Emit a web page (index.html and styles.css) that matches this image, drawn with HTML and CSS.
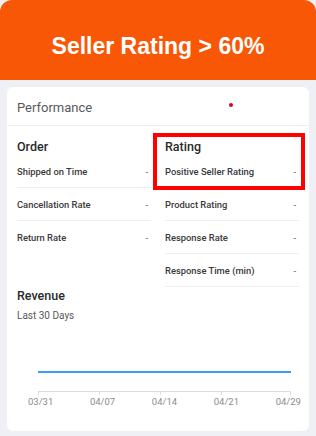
FILE: index.html
```html
<!DOCTYPE html>
<html lang="en">
<head>
    <meta charset="UTF-8">
    <meta name="viewport" content="width=device-width, initial-scale=1.0">
    <title>Seller Rating</title>
    <link rel="stylesheet" href="styles.css">
</head>
<body>
    <div class="banner">
        <h1>Seller Rating &gt; 60%</h1>
    </div>

    <div class="page">
        <div class="card">
            <div class="card-header">
                <span>Performance</span>
                <span class="dot"></span>
            </div>

            <div class="metrics">
                <div class="metric-col">
                    <h3>Order</h3>
                    <div class="metric-row"><span>Shipped on Time</span><span class="val">-</span></div>
                    <div class="metric-row"><span>Cancellation Rate</span><span class="val">-</span></div>
                    <div class="metric-row"><span>Return Rate</span><span class="val">-</span></div>
                </div>
                <div class="metric-col rating">
                    <h3>Rating</h3>
                    <div class="metric-row"><span>Positive Seller Rating</span><span class="val">-</span></div>
                    <div class="metric-row"><span>Product Rating</span><span class="val">-</span></div>
                    <div class="metric-row"><span>Response Rate</span><span class="val">-</span></div>
                    <div class="metric-row"><span>Response Time (min)</span><span class="val">-</span></div>
                    <div class="highlight"></div>
                </div>
            </div>

            <div class="revenue">
                <h3>Revenue</h3>
                <p class="sub">Last 30 Days</p>
                <div class="chart">
                    <div class="line"></div>
                    <div class="axis">
                        <span class="tick" style="left: 0%"></span>
                        <span class="tick" style="left: 24.1%"></span>
                        <span class="tick" style="left: 48.2%"></span>
                        <span class="tick" style="left: 72.3%"></span>
                        <span class="tick" style="left: 100%"></span>
                    </div>
                    <div class="labels">
                        <span>03/31</span>
                        <span>04/07</span>
                        <span>04/14</span>
                        <span>04/21</span>
                        <span>04/29</span>
                    </div>
                </div>
            </div>
        </div>
    </div>
</body>
</html>
```

FILE: styles.css
```css
:root {
    --orange: #f85706;
    --bg-page: #eff0f5;
    --text-primary: #2b2b2b;
    --text-secondary: #595959;
    --text-muted: #8c8c8c;
    --line: #efefef;
    --blue: #3b9bf5;
}

body {
    font-family: Roboto, "Liberation Sans", sans-serif;
    margin: 0;
    background: var(--bg-page);
    color: var(--text-primary);
    width: 316px;
    height: 436px;
    overflow: hidden;
}

.banner {
    background: var(--orange);
    height: 80px;
    border-radius: 12px 12px 0 0;
    display: flex;
    align-items: center;
    justify-content: center;
}

.banner h1 {
    margin: 13px 0 0;
    color: #fff;
    font-family: "Liberation Sans", Arial, sans-serif;
    font-size: 23px;
    font-weight: 700;
}

.page {
    padding: 7px 7px 0 7px;
}

.card {
    background: #fff;
    border-radius: 6px;
    height: 344px;
    padding: 0 10px;
    box-sizing: border-box;
}

.card-header {
    height: 39px;
    border-bottom: 1px solid var(--line);
    margin: 0 -10px;
    padding: 3px 10px 0;
    box-sizing: border-box;
    display: flex;
    align-items: center;
    font-size: 13px;
    color: var(--text-secondary);
    position: relative;
}

.dot {
    position: absolute;
    left: 222px;
    top: 16px;
    width: 4px;
    height: 4px;
    border-radius: 50%;
    background: #e8001c;
}

.metrics {
    display: grid;
    grid-template-columns: 1fr 1fr;
    column-gap: 14px;
    padding-top: 13px;
}

.metric-col {
    position: relative;
}

h3 {
    margin: 0;
    font-size: 12.5px;
    font-weight: 500;
    color: var(--text-primary);
    height: 16px;
    line-height: 16px;
}

.metric-row {
    height: 33px;
    display: flex;
    align-items: center;
    justify-content: space-between;
    padding-right: 3px;
    border-bottom: 1px solid var(--line);
    font-size: 9.4px;
    font-weight: 500;
    color: #3a3a3a;
    box-sizing: border-box;
}

.metric-row:last-of-type {
    border-bottom: none;
}

.metric-row .val {
    font-weight: 400;
    color: var(--text-secondary);
}

.highlight {
    position: absolute;
    left: -12px;
    right: -6px;
    top: -6px;
    height: 57px;
    border: 4px solid #ff0000;
    box-sizing: border-box;
}

.revenue {
    padding-top: 1px;
}

.sub {
    margin: 6px 0 0;
    font-size: 10px;
    color: var(--text-secondary);
}

.chart {
    position: relative;
    margin: 50px 8px 0 21px;
}

.line {
    height: 2px;
    background: var(--blue);
}

.axis {
    position: relative;
    margin-top: 18px;
    height: 1px;
    background: #dcdcdc;
}

.tick {
    position: absolute;
    top: 0;
    width: 1px;
    height: 4px;
    background: #dcdcdc;
}

.tick:last-child {
    margin-left: -1px;
}

.labels {
    display: flex;
    justify-content: space-between;
    margin: 4px -10px 0;
    font-size: 9.5px;
    color: var(--text-muted);
}
```
